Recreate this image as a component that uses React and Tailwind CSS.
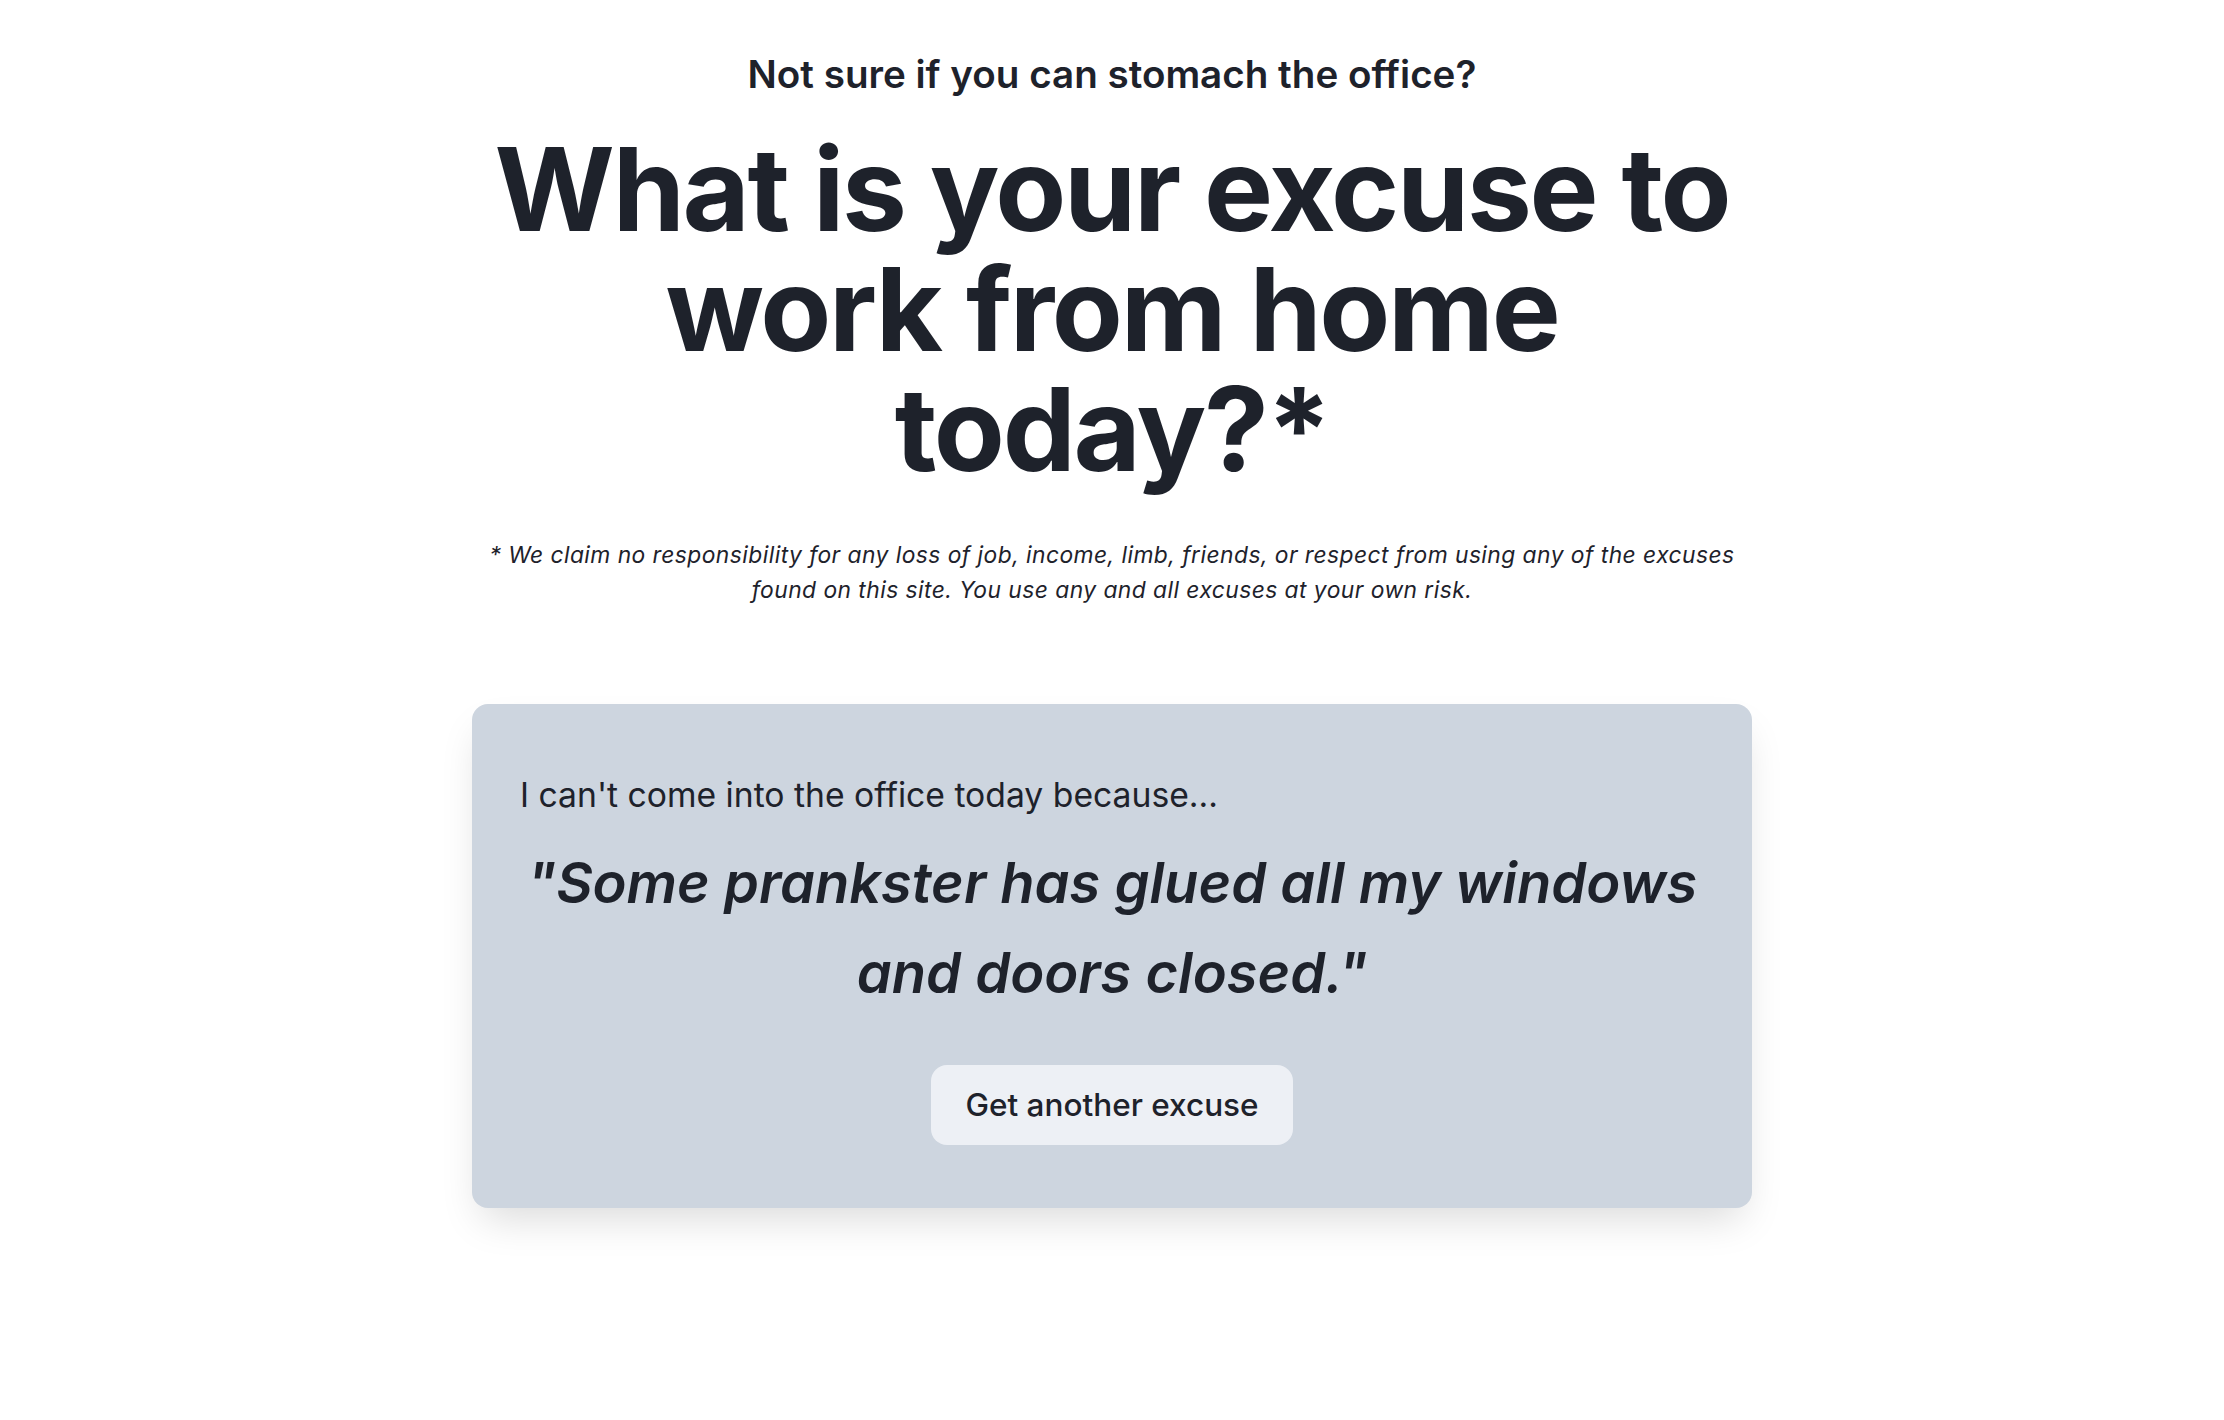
export default function App() {
  return (
    <div className="min-h-screen bg-white text-[#1e222b] font-['Inter',sans-serif]">
      <div className="mx-auto w-[1280px] pt-[54px] pb-24 flex flex-col items-center text-center">
        <h2 className="text-[38.6px] leading-[40px] font-semibold">
          Not sure if you can stomach the office?
        </h2>
        <h1 className="mt-[35px] text-[116px] leading-[120px] font-bold tracking-[-0.02em]">
          What is your excuse to work from home today?*
        </h1>
        <p className="mt-[48px] text-[22.8px] leading-[35px] italic tracking-[0.02em]">
          * We claim no responsibility for any loss of job, income, limb, friends, or respect from using any of the excuses found on this site. You use any and all excuses at your own risk.
        </p>

        <div className="mt-[97px] w-full rounded-2xl bg-[#cdd5df] px-12 pt-[67px] pb-[63px] shadow-[0_20px_40px_-10px_rgba(0,0,0,0.15)] text-left">
          <p className="text-[33.7px] leading-[48px]">I can't come into the office today because...</p>
          <p className="mt-[19px] text-center text-[56px] leading-[90px] font-semibold italic">
            "Some prankster has glued all my windows and doors closed."
          </p>
          <div className="mt-[47px] flex justify-center">
            <button className="rounded-2xl bg-[#edf0f5] px-[34px] py-4 text-[31.5px] leading-[48px] font-medium">
              Get another excuse
            </button>
          </div>
        </div>
      </div>
    </div>
  )
}
